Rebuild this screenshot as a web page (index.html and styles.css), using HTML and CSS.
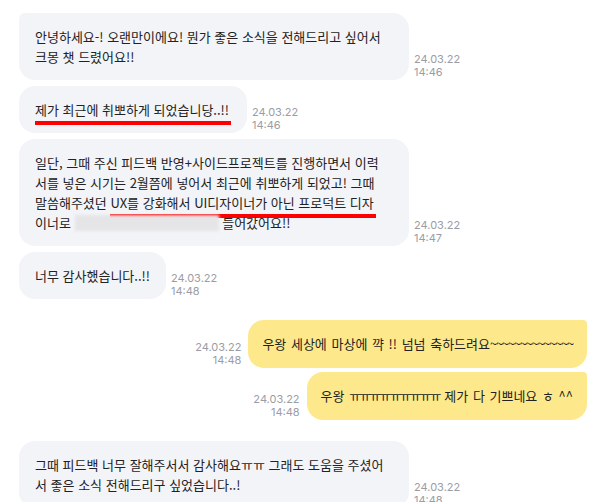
FILE: index.html
```html
<!DOCTYPE html>
<html lang="ko">
<head>
    <meta charset="UTF-8">
    <meta name="viewport" content="width=device-width, initial-scale=1.0">
    <title>Chat</title>
    <link rel="stylesheet" href="styles.css">
</head>
<body>
    <div class="chat">
        <div class="row">
            <div class="bubble long first">안녕하세요-! 오랜만이에요! 뭔가 좋은 소식을 전해드리고 싶어서<br>크몽 챗 드렸어요!!</div>
            <div class="time">24.03.22<br>14:46</div>
        </div>
        <div class="row">
            <div class="bubble"><span class="mark">제가 최근에 취뽀하게 되었습니당..!!</span></div>
            <div class="time">24.03.22<br>14:46</div>
        </div>
        <div class="row">
            <div class="bubble long">일단, 그때 주신 피드백 반영+사이드프로젝트를 진행하면서 이력<br>서를 넣은 시기는 2월쯤에 넣어서 최근에 취뽀하게 되었고! 그때<br>말씀해주셨던 <span class="mark">UX를 강화해서 UI디자이너가 아닌 프로덕트 디자</span><br>이너로 <span class="blur"></span> 들어갔어요!!</div>
            <div class="time">24.03.22<br>14:47</div>
        </div>
        <div class="row">
            <div class="bubble">너무 감사했습니다..!!</div>
            <div class="time">24.03.22<br>14:48</div>
        </div>

        <div class="row mine group">
            <div class="bubble">우왕 세상에 마상에 꺅 !! 넘넘 축하드려요<span class="tight">~~~~~~~~~~~~~~</span></div>
            <div class="time">24.03.22<br>14:48</div>
        </div>
        <div class="row mine">
            <div class="bubble">우왕 <span class="jamo">ㅠㅠㅠㅠㅠㅠㅠㅠㅠ</span> 제가 다 기쁘네요 ㅎ ^^</div>
            <div class="time">24.03.22<br>14:48</div>
        </div>

        <div class="row group">
            <div class="bubble long">그때 피드백 너무 잘해주서서 감사해요ㅠㅠ 그래도 도움을 주셨어<br>서 좋은 소식 전해드리구 싶었습니다..!</div>
            <div class="time">24.03.22<br>14:48</div>
        </div>
    </div>
</body>
</html>
```

FILE: styles.css
```css
body {
    margin: 0;
    padding: 0;
    background-color: #fff;
    font-family: 'Noto Sans CJK KR', 'Noto Sans', sans-serif;
    color: #222;
    overflow: hidden;
}
.chat {
    display: flex;
    flex-direction: column;
    gap: 6px;
    padding: 13px 25px 0 19px;
}
.row {
    display: flex;
    align-items: flex-end;
    gap: 5px;
}
.row.group {
    margin-top: 15px;
}
.row.mine {
    flex-direction: row-reverse;
    gap: 7px;
}
.row.mine + .row.mine {
    margin-top: -2px;
}
.bubble {
    background-color: #f3f4f8;
    border-radius: 16px;
    padding: 13.5px 16px;
    font-size: 13px;
    line-height: 20px;
    white-space: nowrap;
}
.bubble.long {
    width: 358px;
}
.bubble.first {
    border-top-left-radius: 6px;
}
.mine .bubble {
    background-color: #fde98b;
    border-top-right-radius: 4px;
    padding: 14px 14px;
    word-spacing: 1px;
}
.tight {
    letter-spacing: -1.3px;
}
.jamo {
    letter-spacing: -1.9px;
}
.time {
    font-family: 'Inter', 'Liberation Sans', sans-serif;
    font-size: 11px;
    line-height: 13px;
    color: #9c9ca4;
    padding-bottom: 1px;
    white-space: nowrap;
}
.mine .time {
    text-align: right;
}
.mark {
    padding-bottom: 2px;
    padding-right: 2px;
    border-bottom: 4px solid #ff0000;
}
.blur {
    display: inline-block;
    width: 144px;
    height: 16px;
    vertical-align: -3px;
    background-color: #e5e5e7;
    filter: blur(1.5px);
}
```
